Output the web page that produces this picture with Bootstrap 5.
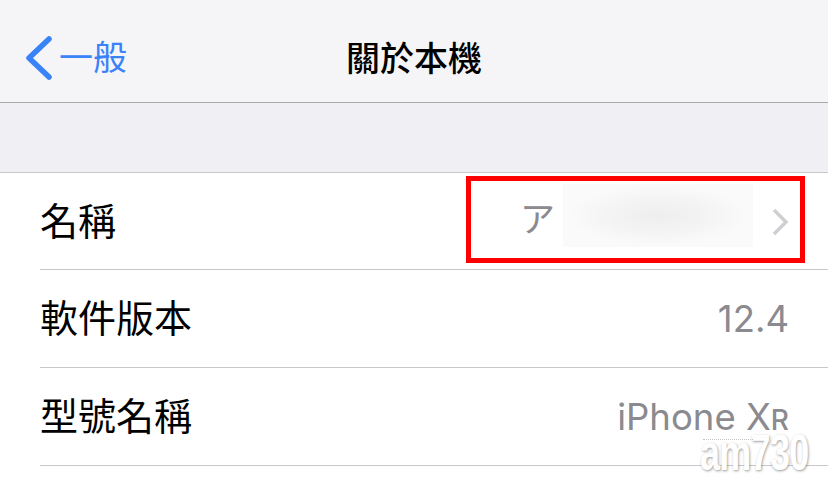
<!DOCTYPE html>
<html lang="zh-Hant">
<head>
<meta charset="utf-8">
<title>關於本機</title>
<link href="https://cdn.jsdelivr.net/npm/bootstrap@5.3.0/dist/css/bootstrap.min.css" rel="stylesheet">
<style>
html,body{height:491px;overflow:hidden;background:#fff}
body{font-family:"Inter","Noto Sans CJK TC",sans-serif;position:relative}
.topbar{height:103px;background:#f5f5f8;border-bottom:1px solid #a9a9ac;position:relative}
.back-link{padding:14px 0 0 25px;color:#3a82f7;font-size:34px;line-height:1;gap:7px;height:102px}
.back-link svg{display:block;margin-top:-1px}
.title-text{position:absolute;left:0;right:0;top:0;height:102px;line-height:118px;text-align:center;font-size:34px;color:#000;font-weight:500}
.band{height:70px;background:#efeff4;border-bottom:1px solid #c8c7cc}
.row-item{height:98px;margin-left:40px;border-bottom:1px solid #c8c7cc;padding-right:39px;font-size:38px;color:#000}
.row-first{height:97px}
.val{font-size:36.5px;color:#8a8a8f;margin-top:2px;margin-right:2px}
.val-num{margin-right:0}
.blur-box{width:190px;height:63px;background:radial-gradient(ellipse 90px 30px at 50% 50%,#eeeeee 0%,#f3f3f3 50%,#fafafa 100%);margin:-12px 18px 0 8px}
.kana{font-size:35px;color:#8a8a8f;margin-top:-3px}
.small-r{font-size:28px;font-weight:500}
.chev{display:block;margin-top:2px}
.red-frame{position:absolute;left:466px;top:176px;width:339px;height:87px;border:5px solid #ff0000}
.wm{position:absolute;left:700px;top:428px;color:#fff;font-family:"Liberation Sans",sans-serif;font-weight:700;font-size:50px;line-height:1;letter-spacing:-1px;text-shadow:1px 1px 3px rgba(0,0,0,.4);transform:scaleX(.72);transform-origin:left top}
.wm-dots{position:absolute;left:703px;top:439px;width:50px;border-top:1px dotted #c4c4c4}
</style>
</head>
<body>
<div class="topbar">
  <div class="d-flex align-items-center back-link">
    <svg width="27" height="44" viewBox="0 0 27 44" fill="none"><path d="M24 3 L4 22 L24 41" stroke="#3a82f7" stroke-width="5.5" stroke-linecap="round" stroke-linejoin="round"/></svg>
    <span>一般</span>
  </div>
  <div class="title-text">關於本機</div>
</div>
<div class="band"></div>
<div class="d-flex align-items-center justify-content-between row-item row-first">
  <span>名稱</span>
  <div class="d-flex align-items-center">
    <span class="kana">ア</span>
    <div class="blur-box"></div>
    <svg class="chev" width="18" height="28" viewBox="0 0 18 28" fill="none"><path d="M3 2 L15 14 L3 26" stroke="#cfcfd3" stroke-width="3.4"/></svg>
  </div>
</div>
<div class="d-flex align-items-center justify-content-between row-item">
  <span>軟件版本</span>
  <span class="val val-num">12.4</span>
</div>
<div class="d-flex align-items-center justify-content-between row-item">
  <span>型號名稱</span>
  <span class="val val-num">iPhone X<span class="small-r">R</span></span>
</div>
<div class="red-frame"></div>
<div class="wm">am730</div>
<div class="wm-dots"></div>
</body>
</html>
